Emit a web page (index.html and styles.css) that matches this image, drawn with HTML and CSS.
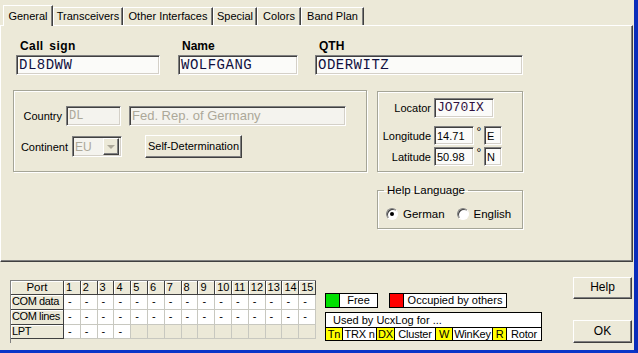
FILE: index.html
```html
<!DOCTYPE html>
<html>
<head>
<meta charset="utf-8">
<link rel="stylesheet" href="styles.css">
</head>
<body>
<div class="frame">
  <div class="win">
    <div class="tabs">
      <div class="tab active t-gen">General</div>
      <div class="tab t-trx">Transceivers</div>
      <div class="tab t-oth">Other Interfaces</div>
      <div class="tab t-spe">Special</div>
      <div class="tab t-col">Colors</div>
      <div class="tab t-bp">Band Plan</div>
    </div>
    <div class="panel">
      <div class="fields">
        <div class="field f-call"><div class="blabel">Call sign</div><div class="inp mono">DL8DWW</div></div>
        <div class="field f-name"><div class="blabel">Name</div><div class="inp mono">WOLFGANG</div></div>
        <div class="field f-qth"><div class="blabel">QTH</div><div class="inp mono">ODERWITZ</div></div>
      </div>
      <div class="row2">
        <div class="group g-country">
          <div class="line l-country">
            <div class="lbl lb-country">Country</div>
            <div class="inp dis mono w-dl">DL</div>
            <div class="inp dis sans w-fed">Fed. Rep. of Germany</div>
          </div>
          <div class="line l-cont">
            <div class="lbl lb-cont">Continent</div>
            <div class="inp dis sans combo"><span class="ctext">EU</span><span class="cbtn"><span class="tri"></span></span></div>
            <div class="btn b-self">Self-Determination</div>
          </div>
        </div>
        <div class="rightcol">
          <div class="group g-loc">
            <div class="line l-loc">
              <div class="lbl lb-loc">Locator</div>
              <div class="inp mono13 w-loc">JO70IX</div>
            </div>
            <div class="line l-lon">
              <div class="lbl lb-loc">Longitude</div>
              <div class="inp sans w-num">14.71</div>
              <div class="deg">°</div>
              <div class="inp sans w-dir">E</div>
            </div>
            <div class="line l-lat">
              <div class="lbl lb-loc">Latitude</div>
              <div class="inp sans w-num">50.98</div>
              <div class="deg">°</div>
              <div class="inp sans w-dir">N</div>
            </div>
          </div>
          <fieldset class="g-help">
            <legend>Help Language</legend>
            <div class="radios">
              <div class="radio r-ger"><span class="rc on"></span>German</div>
              <div class="radio r-eng"><span class="rc"></span>English</div>
            </div>
          </fieldset>
        </div>
      </div>
    </div>
    <div class="bottom">
      <div class="ports">
        <div class="c hd port">Port</div>
        <div class="c hd">1</div><div class="c hd">2</div><div class="c hd">3</div><div class="c hd">4</div><div class="c hd">5</div>
        <div class="c hd">6</div><div class="c hd">7</div><div class="c hd">8</div><div class="c hd">9</div><div class="c hd">10</div>
        <div class="c hd">11</div><div class="c hd">12</div><div class="c hd">13</div><div class="c hd">14</div><div class="c hd">15</div>

        <div class="c hd rl">COM data</div>
        <div class="c d">-</div><div class="c d">-</div><div class="c d">-</div><div class="c d">-</div><div class="c d">-</div>
        <div class="c d">-</div><div class="c d">-</div><div class="c d">-</div><div class="c d">-</div><div class="c d">-</div>
        <div class="c d">-</div><div class="c d">-</div><div class="c d">-</div><div class="c d">-</div><div class="c d">-</div>

        <div class="c hd rl">COM lines</div>
        <div class="c d">-</div><div class="c d">-</div><div class="c d">-</div><div class="c d">-</div><div class="c d">-</div>
        <div class="c d">-</div><div class="c d">-</div><div class="c d">-</div><div class="c d">-</div><div class="c d">-</div>
        <div class="c d">-</div><div class="c d">-</div><div class="c d">-</div><div class="c d">-</div><div class="c d">-</div>

        <div class="c hd rl">LPT</div>
        <div class="c d">-</div><div class="c d">-</div><div class="c d">-</div><div class="c d">-</div>
        <div class="c e"></div><div class="c e"></div><div class="c e"></div><div class="c e"></div><div class="c e"></div><div class="c e"></div>
        <div class="c e"></div><div class="c e"></div><div class="c e"></div><div class="c e"></div><div class="c e"></div>
      </div>
      <div class="legend">
        <div class="lrow">
          <div class="lbox l-free"><span class="sw green"></span><span class="lt">Free</span></div>
          <div class="lbox l-occ"><span class="sw red"></span><span class="lt">Occupied by others</span></div>
        </div>
        <div class="used">
          <div class="utitle">Used by UcxLog for ...</div>
          <div class="urow">
            <span class="uc y u1">Tn</span><span class="uc u2">TRX n</span><span class="uc y u3">DX</span><span class="uc u4">Cluster</span><span class="uc y u5">W</span><span class="uc u6">WinKey</span><span class="uc y u7">R</span><span class="uc u8">Rotor</span>
          </div>
        </div>
      </div>
      <div class="buttons">
        <div class="btn b-help">Help</div>
        <div class="btn b-ok">OK</div>
      </div>
    </div>
  </div>
</div>
</body>
</html>
```

FILE: styles.css
```css
* { box-sizing: border-box; }
html, body { margin: 0; padding: 0; }
body {
  background: #ECE9D8;
  font-family: "Liberation Sans", Arial, sans-serif;
  font-size: 11px;
  color: #000;
}
.frame {
  width: 638px;
  height: 353px;
  border-right: 4px solid #0A2DBA;
  border-bottom: 3px solid #0A36C8;
  overflow: hidden;
  background: #ECE9D8;
}
.win { width: 634px; height: 350px; }

/* tabs */
.tabs {
  height: 25px;
  display: flex;
  align-items: flex-end;
  padding-left: 3px;
}
.tab {
  height: 18px;
  border-top: 1px solid #fff;
  border-left: 1px solid #fff;
  border-right: 1px solid #404040;
  box-shadow: inset -1px 0 0 #808080;
  text-align: center;
  line-height: 14px;
  padding-top: 1px;
  white-space: nowrap;
  font-size: 11px;
}
.tab.active {
  height: 21px;
  margin-bottom: -1px;
  padding-top: 3px;
  position: relative;
  z-index: 1;
  background: #ECE9D8;
}
.t-gen { width: 50px; }
.t-trx { width: 70px; }
.t-oth { width: 90px; }
.t-spe { width: 44px; }
.t-col { width: 44px; }
.t-bp { width: 63px; }

/* panel */
.panel {
  width: 633px;
  height: 237px;
  border-top: 1px solid #fff;
  border-left: 1px solid #fff;
  border-right: 1px solid #404040;
  border-bottom: 1px solid #404040;
  box-shadow: inset -1px -1px 0 #808080;
}
.fields {
  display: flex;
  margin-top: 13px;
  padding-left: 15px;
}
.field { display: flex; flex-direction: column; }
.f-call { width: 144px; }
.f-name { width: 120px; margin-left: 18px; }
.f-qth { width: 208px; margin-left: 17px; }
.blabel {
  font-weight: bold;
  font-size: 12px;
  line-height: 14px;
  height: 14px;
  padding-left: 4px;
  margin-bottom: 2px;
}
.f-call .blabel { letter-spacing: 0.4px; word-spacing: 2px; }

.inp {
  height: 20px;
  background: #FBFBF9;
  border-top: 1px solid #808080;
  border-left: 1px solid #808080;
  border-right: 1px solid #fff;
  border-bottom: 1px solid #fff;
  box-shadow: inset 1px 1px 0 #404040, inset -1px -1px 0 #D4D0C8;
  padding-left: 2px;
  line-height: 18px;
  white-space: nowrap;
  overflow: hidden;
}
.mono {
  font-family: "Liberation Mono", "Courier New", monospace;
  font-size: 14px;
  letter-spacing: 0.5px;
  color: #101040;
}
.mono13 {
  font-family: "Liberation Mono", "Courier New", monospace;
  font-size: 13px;
  color: #301040;
}
.sans { font-family: "Liberation Sans", Arial, sans-serif; font-size: 11px; }
.inp.dis { background: #F4F3EE; color: #ACA899; }

.row2 { display: flex; margin-top: 15px; }
.group {
  border: 1px solid #A5A597;
  box-shadow: inset 1px 1px 0 #fff, 1px 1px 0 #fff;
}
.g-country {
  width: 354px;
  height: 82px;
  margin-left: 12px;
}
.line { display: flex; align-items: center; }
.lbl { text-align: right; white-space: nowrap; }
.l-country { margin-top: 15px; height: 20px; }
.lb-country { width: 48px; margin-right: 4px; }
.w-dl { width: 55px; font-size: 12px; letter-spacing: 0; }
.w-fed { width: 217px; margin-left: 8px; font-size: 13px; }
.l-cont { margin-top: 9px; height: 23px; }
.lb-cont { width: 54px; margin-right: 4px; }
.combo {
  width: 50px;
  height: 21px;
  display: flex;
  align-items: center;
  padding-right: 2px;
  font-size: 12px;
}
.ctext { flex: 1; }
.cbtn {
  width: 16px;
  height: 17px;
  background: #ECE9D8;
  border-top: 1px solid #fff;
  border-left: 1px solid #fff;
  border-right: 1px solid #404040;
  border-bottom: 1px solid #404040;
  box-shadow: inset -1px -1px 0 #808080;
  display: flex;
  align-items: center;
  justify-content: center;
}
.tri {
  width: 0; height: 0;
  border-left: 4px solid transparent;
  border-right: 4px solid transparent;
  border-top: 4px solid #ACA899;
}
.btn {
  background: #ECE9D8;
  border-top: 1px solid #fff;
  border-left: 1px solid #fff;
  border-right: 1px solid #404040;
  border-bottom: 1px solid #404040;
  box-shadow: inset -1px -1px 0 #808080;
  text-align: center;
  white-space: nowrap;
}
.b-self { width: 97px; height: 23px; line-height: 20px; margin-left: 23px; }

.rightcol { margin-left: 10px; margin-top: 1px; }
.g-loc { width: 146px; height: 81px; }
.lb-loc { width: 53px; margin-right: 3px; }
.l-loc { margin-top: 6px; height: 20px; }
.w-loc { width: 60px; }
.l-lon { margin-top: 8px; height: 19px; }
.l-lat { margin-top: 2px; height: 19px; }
.w-num { width: 40px; height: 19px; }
.w-dir { width: 18px; height: 19px; padding-left: 2px; }
.deg { width: 10px; text-align: center; align-self: flex-start; line-height: 12px; font-size: 12px; }

.g-help {
  width: 146px;
  height: 46px;
  margin: 11px 0 0 0;
  padding: 0;
  border: 1px solid #A5A597;
  box-shadow: inset 1px 1px 0 #fff, 1px 1px 0 #fff;
}
.g-help legend {
  margin-left: 6px;
  padding: 0 3px;
  line-height: 14px;
  font-size: 11.5px;
}
.radios { display: flex; margin-top: 11px; align-items: center; }
.radio { display: flex; align-items: center; font-size: 11.5px; }
.r-ger { margin-left: 8px; }
.r-eng { margin-left: 12px; }
.rc {
  width: 12px;
  height: 12px;
  border-radius: 50%;
  background: #fff;
  border: 1px solid;
  border-color: #808080 #fff #fff #808080;
  box-shadow: inset 1px 1px 0 #404040;
  margin-right: 5px;
  display: flex;
  align-items: center;
  justify-content: center;
}
.rc.on::after {
  content: "";
  width: 4px;
  height: 4px;
  border-radius: 50%;
  background: #000;
}

/* bottom */
.bottom { display: flex; padding-left: 10px; padding-top: 15px; }
.ports {
  margin-top: 3px;
  width: 306px;
  display: grid;
  grid-template-columns: 53px repeat(15, 1fr);
  grid-template-rows: 14px 15px 15px 14px;
  border-top: 1px solid #808080;
  border-left: 1px solid #808080;
  font-size: 11px;
}
.c {
  border-right: 1px solid #C8C8C0;
  border-bottom: 1px solid #C8C8C0;
  line-height: 13px;
  white-space: nowrap;
  overflow: hidden;
}
.hd {
  background: #ECE9D8;
  border-right: 1px solid #404040;
  border-bottom: 1px solid #404040;
  box-shadow: inset 1px 1px 0 #fff;
  padding-left: 2px;
}
.hd.rl { letter-spacing: -0.4px; padding-left: 1px; }
.hd.port { text-align: center; padding-left: 0; font-size: 11.5px; }
.d { background: #fff; padding-left: 4px; }
.e { background: #ECE9D8; }

.legend { margin-left: 9px; margin-top: 16px; font-size: 11px; }
.lrow { display: flex; }
.lbox {
  height: 15px;
  border: 1px solid #000;
  background: #fff;
  display: flex;
}
.l-free { width: 53px; }
.l-occ { width: 118px; margin-left: 11px; }
.sw { width: 14px; height: 13px; border-right: 1px solid #000; }
.green { background: #00E000; }
.red { background: #FF0000; }
.lt { flex: 1; text-align: center; line-height: 13px; }
.used {
  margin-top: 4px;
  width: 217px;
  height: 29px;
  border: 1px solid #000;
  background: #fff;
}
.utitle { height: 14px; line-height: 14px; padding-left: 7px; }
.urow { display: flex; border-top: 1px solid #000; height: 13px; line-height: 12px; letter-spacing: -0.2px; }
.uc { border-right: 1px solid #000; text-align: center; }
.uc:last-child { border-right: 0; flex: 1; }
.y { background: #FFFF00; }
.u1 { width: 17px; }
.u2 { width: 34px; }
.u3 { width: 18px; }
.u4 { width: 41px; }
.u5 { width: 17px; }
.u6 { width: 40px; }
.u7 { width: 14px; }

.buttons { margin-left: auto; margin-right: 2px; display: flex; flex-direction: column; }
.b-help { width: 59px; height: 22px; line-height: 19px; font-size: 12px; }
.b-ok { width: 59px; height: 23px; line-height: 20px; margin-top: 21px; font-size: 12px; }
```
